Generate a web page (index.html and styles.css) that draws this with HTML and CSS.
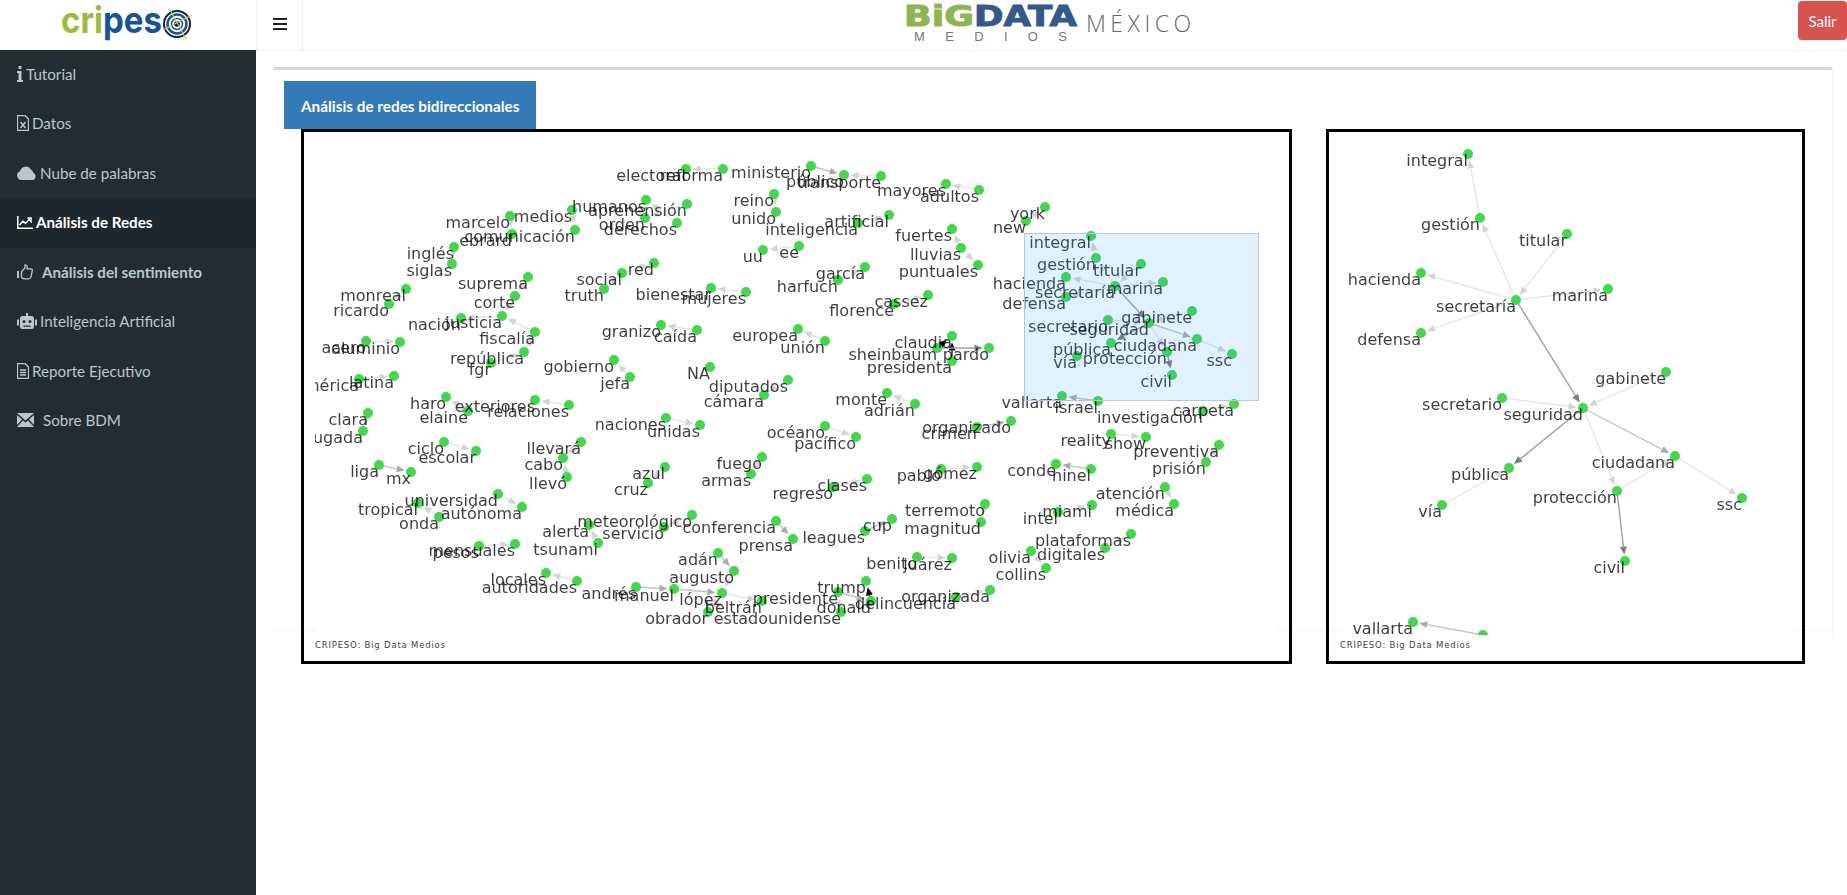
FILE: index.html
```html
<!DOCTYPE html>
<html>
<head>
  <meta charset="utf-8">
  <title>Análisis de Redes</title>
  <meta name="viewport" content="width=device-width, initial-scale=1.0">
  <link rel="stylesheet" href="styles.css">
</head>
<body>
  <div class="app">
    <aside class="side">
      <div class="logo">
        <svg width="256" height="50" viewBox="0 0 256 50">
          <text class="logo-word" x="61" y="33" textLength="101" lengthAdjust="spacingAndGlyphs"><tspan class="logo-green">cri</tspan><tspan class="logo-blue">pes</tspan></text>
          <circle cx="177" cy="24" r="13" fill="none" stroke="#222" stroke-width="2"/>
          <circle cx="177" cy="24" r="9.5" fill="none" stroke="#15549a" stroke-width="2.5"/>
          <circle cx="177" cy="24" r="5.5" fill="none" stroke="#15549a" stroke-width="1.5"/>
          <circle cx="177" cy="24" r="2.8" fill="#111"/>
          <path d="M163 30L192 15M169 8L186 39" stroke="#b5cf6b" stroke-width="1.2"/>
        </svg>
      </div>
      <nav class="menu">
        <a class="item">
          <svg class="ico" width="6" height="16" viewBox="0 0 6 16"><path d="M1.5 0h3v3h-3zM0 5h4.500v9H6v2H0v-2h1.500V7H0z"/></svg>
          <span>Tutorial</span>
        </a>
        <a class="item">
          <svg class="ico" width="12" height="16" viewBox="0 0 12 16"><path d="M1 .5h7L11.500 4v11.500H.5V.5z" fill="none" stroke="currentColor" stroke-width="1.300"/><path d="M3.500 7l5 6M8.500 7l-5 6" stroke="currentColor" stroke-width="1.500" fill="none"/></svg>
          <span>Datos</span>
        </a>
        <a class="item">
          <svg class="ico" width="20" height="15" viewBox="0 0 20 15"><path d="M4.500 15A4.500 4.500 0 0 1 3 6.300 6 6 0 0 1 14 4.500a3.500 3.500 0 0 1 2 3A4 4 0 0 1 16 15z"/></svg>
          <span>Nube de palabras</span>
        </a>
        <a class="item active">
          <svg class="ico" width="16" height="13" viewBox="0 0 16 13"><path d="M.8 0v12.200H16" fill="none" stroke="currentColor" stroke-width="1.500"/><path d="M2.500 9L6 5l2.500 2.500L12 3.500l2 2V2h-3.500" fill="none" stroke="currentColor" stroke-width="1.500"/></svg>
          <span>Análisis de Redes</span>
        </a>
        <a class="item bold wide">
          <svg class="ico" width="16" height="16" viewBox="0 0 16 16"><path d="M0 7h2v7H0z"/><path d="M4.500 7.500L8 4V.8c2 0 2.500 1.700 2 4h4c1.500 0 1.500 1.500 1 3l-1 5c-.3 1.200-1 2-2.500 2H8c-2 0-3.500-1-3.500-2z" fill="none" stroke="currentColor" stroke-width="1.300"/></svg>
          <span>Análisis del sentimiento</span>
        </a>
        <a class="item">
          <svg class="ico" width="20" height="16" viewBox="0 0 20 16"><path d="M9 0h2v3H9z"/><path d="M5.500 3h9A2.500 2.500 0 0 1 17 5.500v8a2.500 2.500 0 0 1-2.500 2.500h-9A2.500 2.500 0 0 1 3 13.500v-8A2.500 2.500 0 0 1 5.500 3zM7 7a1.500 1.500 0 1 0 0 3 1.500 1.500 0 0 0 0-3zm6 0a1.500 1.500 0 1 0 0 3 1.500 1.500 0 0 0 0-3zM6.500 12.500v1.500h2v-1.500zm2.500 0v1.500h2v-1.500zm2.500 0v1.500h2v-1.500z" fill-rule="evenodd"/><path d="M0 6.500h2v6H0zM18 6.500h2v6h-2z"/></svg>
          <span>Inteligencia Artificial</span>
        </a>
        <a class="item">
          <svg class="ico" width="12" height="16" viewBox="0 0 12 16"><path d="M1 .5h7L11.500 4v11.500H.5V.5z" fill="none" stroke="currentColor" stroke-width="1.300"/><path d="M3 7h6M3 9.500h6M3 12h6" stroke="currentColor" stroke-width="1.300"/></svg>
          <span>Reporte Ejecutivo</span>
        </a>
        <a class="item wide">
          <svg class="ico" width="17" height="14" viewBox="0 0 17 14"><path d="M0 0h17L8.500 7.500zM0 2l5 4.500L0 12zM17 2l-5 4.500L17 12zM6 7.500L8.500 9.500 11 7.500 17 14H0z"/></svg>
          <span>Sobre BDM</span>
        </a>
      </nav>
    </aside>

    <main class="main">
      <header class="top">
        <button class="toggle" type="button">
          <svg width="14" height="12" viewBox="0 0 14 12"><path d="M0 0h14v2H0zM0 5h14v2H0zM0 10h14v2H0z" fill="#222"/></svg>
        </button>
        <div class="brand">
          <svg width="287" height="50" viewBox="0 0 287 50">
            <text class="big" x="0" y="26" textLength="70" lengthAdjust="spacingAndGlyphs">BiG</text>
            <text class="data" x="70" y="26" textLength="103" lengthAdjust="spacingAndGlyphs">DATA</text>
            <text class="medios" x="10" y="41" textLength="153">MEDIOS</text>
            <text class="mexico" x="182" y="32" textLength="105">MÉXICO</text>
          </svg>
        </div>
        <button class="exit" type="button">Salir</button>
      </header>

      <section class="box">
        <div class="box-body">
          <div class="tab">Análisis de redes bidireccionales</div>
          <div class="frames">
            <div class="frame frame-main">
              <svg id="graphMain" class="graph" width="963" height="503" viewBox="315 132 963 503"></svg>
              <p class="caption">CRIPESO: Big Data Medios</p>
            </div>
            <div class="frame frame-zoom">
              <svg id="graphZoom" class="graph" width="451" height="503" viewBox="1340 132 451 503"></svg>
              <p class="caption">CRIPESO: Big Data Medios</p>
            </div>
          </div>
        </div>
        <div class="box-footer"></div>
      </section>
    </main>
  </div>

  <script src="graph.js"></script>
</body>
</html>
```

FILE: styles.css
```css
body {
  margin: 0;
  font-family: Lato, "Open Sans", sans-serif;
  background-color: #fff;
  color: #333;
}

.app {
  display: flex;
  height: 895px;
  overflow: hidden;
}

/* sidebar */
.side {
  width: 256px;
  flex-shrink: 0;
  background-color: #222d32;
}

.logo {
  height: 50px;
  background-color: #fff;
}

.logo svg {
  display: block;
}

.logo-word {
  font-family: Inter, sans-serif;
  font-weight: 700;
  font-size: 37px;
}

.logo-green {
  fill: #9bbb3c;
}

.logo-blue {
  fill: #15549a;
}

.item {
  display: flex;
  align-items: center;
  height: 49.5px;
  padding-left: 17px;
  padding-bottom: 2px;
  box-sizing: border-box;
  color: #b8c7ce;
  font-size: 15.2px;
}

.ico {
  fill: currentColor;
  margin-right: 3px;
  flex-shrink: 0;
}

.item.active {
  background-color: #1e282c;
  color: #fff;
  font-weight: bold;
}

.item.bold {
  font-weight: bold;
}

.item.wide .ico {
  margin-right: 9px;
}

/* top bar */
.main {
  flex: 1;
  min-width: 0;
}

.top {
  display: flex;
  height: 50px;
  border-bottom: 1px solid #eee;
}

.toggle {
  width: 47px;
  padding: 0;
  background: #fff;
  border: none;
  border-right: 1px solid #eee;
  border-left: 1px solid #eee;
}

.brand {
  flex: 1;
  display: flex;
  justify-content: center;
  padding-right: 7px;
}

.big {
  font-family: "DejaVu Sans", sans-serif;
  font-weight: bold;
  font-size: 28px;
  fill: #8db550;
  stroke: #8db550;
  stroke-width: 1;
}

.data {
  font-family: "DejaVu Sans", sans-serif;
  font-weight: bold;
  font-size: 28px;
  fill: #34598c;
  stroke: #34598c;
  stroke-width: 1;
}

.medios {
  font-family: "Liberation Sans", sans-serif;
  font-size: 13px;
  fill: #777;
}

.mexico {
  font-family: "Open Sans", sans-serif;
  font-weight: 300;
  font-size: 23px;
  fill: #666;
}

.exit {
  width: 49px;
  height: 39px;
  margin-top: 1px;
  padding: 0;
  background-color: #d9534f;
  color: #fff;
  border: none;
  border-radius: 4px;
  font-family: Lato, sans-serif;
  font-size: 15px;
}

/* content box */
.box {
  margin: 16px 14px 0 17px;
  border-top: 3px solid #d2d6de;
  border-right: 1px solid #f4f4f4;
  border-radius: 3px;
}

.box-body {
  height: 560px;
  padding-top: 11px;
  box-sizing: border-box;
}

.box-footer {
  height: 8px;
  border-top: 1px solid #eee;
}

.tab {
  width: 252px;
  height: 48px;
  margin-left: 11px;
  padding-left: 17px;
  box-sizing: border-box;
  background-color: #337ab7;
  color: #fff;
  font-size: 15.300px;
  font-weight: bold;
  line-height: 50px;
}

.frames {
  display: flex;
  gap: 34px;
  margin-left: 28px;
  position: relative;
  z-index: 1;
}

.frame {
  height: 535px;
  box-sizing: border-box;
  border: 3px solid #000;
}

.frame-main {
  width: 991px;
  padding-left: 11px;
}

.frame-zoom {
  width: 479px;
  padding-left: 11px;
}

.graph {
  display: block;
  background-color: #fff;
  filter: blur(0.35px);
}

.caption {
  margin: 3px 0 0;
  font-family: "DejaVu Sans", sans-serif;
  font-size: 8.500px;
  letter-spacing: 0.8px;
  line-height: 14px;
  color: #444;
}

/* graph parts */
.lbl {
  font-family: "DejaVu Sans", sans-serif;
  font-size: 16px;
  text-anchor: end;
  fill: #000;
  fill-opacity: 0.76;
}

.dot {
  fill: #3fd94a;
}

.lasso {
  fill: rgba(51, 153, 255, 0.14);
  stroke: #b4c7dc;
  stroke-width: 1;
}
```

FILE: graph.js
```js
const mainNodes = {
  electoral: [686, 169], reforma: [723, 169], ministerio: [811, 166], "público": [844, 175], transporte: [881, 176],
  mayores: [946, 184], adultos: [979, 190], medios: [572, 210], marcelo: [510, 216], "comunicación": [575, 230],
  ebrard: [512, 234], humanos: [646, 200], "aprehensión": [687, 204], orden: [645, 218], derechos: [677, 223],
  reino: [774, 194], unido: [776, 212], inteligencia: [858, 223], artificial: [889, 215], uu: [763, 250], ee: [799, 246],
  "inglés": [454, 247], siglas: [452, 264], suprema: [528, 277], corte: [515, 296], justicia: [502, 316],
  "nación": [461, 318], "fiscalía": [535, 332], "república": [524, 352], fgr: [491, 363], red: [654, 263],
  social: [622, 273], truth: [604, 289], bienestar: [711, 288], mujeres: [746, 292], monreal: [406, 289],
  ricardo: [389, 304], granizo: [661, 325], "caída": [697, 330], europea: [798, 329], "unión": [825, 341],
  acero: [366, 341], aluminio: [400, 342], gobierno: [614, 360], jefa: [630, 377], NA: [710, 367],
  diputados: [788, 380], "cámara": [764, 395], "américa": [359, 379], latina: [394, 376], haro: [446, 397],
  elaine: [468, 411], exteriores: [535, 400], relaciones: [569, 405], clara: [368, 413], madrugada: [363, 431],
  ciclo: [444, 442], escolar: [476, 451], "llevará": [581, 442], cabo: [563, 458], "llevó": [567, 477],
  liga: [379, 465], mx: [411, 472], naciones: [666, 418], unidas: [700, 425], azul: [665, 467], cruz: [648, 483],
  fuego: [762, 457], armas: [751, 474], universidad: [498, 494], "autónoma": [522, 507], tropical: [418, 503],
  onda: [439, 517], "meteorológico": [692, 515], servicio: [664, 527], alerta: [589, 525], tsunami: [598, 543],
  conferencia: [776, 521], prensa: [793, 539], mensuales: [515, 544], pesos: [479, 546], "adán": [718, 553],
  augusto: [734, 571], locales: [546, 573], autoridades: [577, 581], "andrés": [636, 587], manuel: [674, 589],
  "lópez": [722, 593], "beltrán": [762, 601], presidente: [838, 592], obrador: [708, 612], estadounidense: [841, 612],
  monte: [887, 393], "adrián": [915, 404], "océano": [825, 426], "pacífico": [856, 437], organizado: [1011, 421],
  crimen: [977, 427], regreso: [833, 487], clases: [867, 479], pablo: [941, 469], "gómez": [977, 467],
  conde: [1056, 464], ninel: [1091, 469], vallarta: [1062, 396], israel: [1098, 401], "investigación": [1203, 411],
  carpeta: [1234, 404], reality: [1111, 434], show: [1146, 437], preventiva: [1219, 445], "prisión": [1206, 462],
  "atención": [1165, 487], "médica": [1174, 504], miami: [1092, 505], intel: [1058, 512], terremoto: [985, 504],
  magnitud: [981, 522], cup: [892, 519], leagues: [865, 531], plataformas: [1131, 534], digitales: [1105, 548],
  olivia: [1031, 551], collins: [1046, 568], benito: [917, 557], "juárez": [952, 558], trump: [866, 581],
  donald: [871, 601], delincuencia: [956, 597], organizada: [990, 590], york: [1045, 207], new: [1026, 221],
  fuertes: [952, 229], lluvias: [961, 248], puntuales: [978, 265], "garcía": [865, 267], harfuch: [838, 280],
  cassez: [928, 295], florence: [894, 304], claudia: [952, 336], sheinbaum: [937, 348], pardo: [989, 348],
  presidenta: [952, 361], integral: [1091, 236], "gestión": [1096, 258], titular: [1141, 264], hacienda: [1066, 277],
  "secretaría": [1115, 286], marina: [1163, 282], defensa: [1066, 297], gabinete: [1192, 311], secretario: [1108, 320],
  seguridad: [1149, 323], ciudadana: [1197, 339], ssc: [1232, 354], "pública": [1111, 343], "protección": [1167, 352],
  "vía": [1077, 356], civil: [1172, 375]
};

// from, to, shade (l light, m mid, d dark, k black)
const clusterEdges = [
  ["gestión", "integral", "l"], ["secretaría", "gestión", "l"], ["titular", "secretaría", "l"],
  ["secretaría", "hacienda", "l"], ["secretaría", "marina", "l"], ["secretaría", "defensa", "l"],
  ["secretaría", "seguridad", "d"], ["gabinete", "seguridad", "l"], ["secretario", "seguridad", "l"],
  ["seguridad", "pública", "d"], ["seguridad", "ciudadana", "m"], ["seguridad", "protección", "l"],
  ["ciudadana", "ssc", "l"], ["protección", "civil", "d"]
];

const mainEdges = clusterEdges.concat([
  ["reforma", "electoral", "l"], ["ministerio", "público", "m"], ["transporte", "público", "l"], ["adultos", "mayores", "l"],
  ["medios", "comunicación", "l"], ["marcelo", "ebrard", "l"], ["derechos", "humanos", "l"], ["aprehensión", "orden", "l"],
  ["reino", "unido", "l"], ["inteligencia", "artificial", "l"], ["ee", "uu", "l"], ["inglés", "siglas", "l"],
  ["suprema", "corte", "l"], ["corte", "justicia", "l"], ["fiscalía", "justicia", "l"], ["justicia", "nación", "l"],
  ["república", "fiscalía", "l"], ["fgr", "república", "l"], ["social", "red", "l"], ["truth", "social", "l"],
  ["mujeres", "bienestar", "l"], ["monreal", "ricardo", "l"], ["caída", "granizo", "l"], ["unión", "europea", "l"],
  ["acero", "aluminio", "l"], ["jefa", "gobierno", "l"], ["diputados", "cámara", "l"], ["américa", "latina", "l"],
  ["elaine", "haro", "l"], ["relaciones", "exteriores", "l"], ["clara", "madrugada", "l"], ["ciclo", "escolar", "l"],
  ["llevó", "cabo", "l"], ["llevará", "cabo", "l"], ["liga", "mx", "m"], ["naciones", "unidas", "l"], ["azul", "cruz", "l"],
  ["fuego", "armas", "l"], ["universidad", "autónoma", "l"], ["onda", "tropical", "l"], ["meteorológico", "servicio", "l"],
  ["tsunami", "alerta", "l"], ["conferencia", "prensa", "m"], ["pesos", "mensuales", "l"], ["adán", "augusto", "m"],
  ["augusto", "lópez", "l"], ["autoridades", "locales", "l"], ["andrés", "manuel", "m"], ["manuel", "lópez", "m"],
  ["lópez", "beltrán", "l"], ["lópez", "obrador", "l"], ["presidente", "donald", "m"], ["estadounidense", "presidente", "l"],
  ["donald", "trump", "k"], ["delincuencia", "organizada", "l"], ["crimen", "organizado", "m"], ["adrián", "monte", "l"],
  ["océano", "pacífico", "l"], ["regreso", "clases", "l"], ["pablo", "gómez", "l"], ["ninel", "conde", "m"],
  ["israel", "vallarta", "m"], ["investigación", "carpeta", "l"], ["reality", "show", "l"], ["preventiva", "prisión", "l"],
  ["atención", "médica", "l"], ["intel", "miami", "l"], ["terremoto", "magnitud", "l"], ["leagues", "cup", "m"],
  ["digitales", "plataformas", "l"], ["olivia", "collins", "l"], ["benito", "juárez", "l"], ["new", "york", "l"],
  ["lluvias", "fuertes", "l"], ["lluvias", "puntuales", "l"], ["harfuch", "garcía", "l"], ["florence", "cassez", "l"],
  ["sheinbaum", "claudia", "k"], ["presidenta", "claudia", "k"], ["sheinbaum", "pardo", "d"]
]);

const zoomNodes = {
  integral: [1468, 154], "gestión": [1480, 218], titular: [1567, 234], hacienda: [1421, 273], "secretaría": [1516, 300],
  marina: [1608, 289], defensa: [1421, 333], gabinete: [1666, 372], secretario: [1502, 398], seguridad: [1583, 408],
  "pública": [1509, 468], ciudadana: [1675, 456], "protección": [1617, 491], "vía": [1442, 505], ssc: [1742, 498],
  civil: [1625, 561], vallarta: [1413, 622], israel: [1483, 635]
};

const zoomEdges = clusterEdges.concat([
  ["vía", "pública", "l"], ["protección", "ciudadana", "l"], ["israel", "vallarta", "m"]
]);

const shades = { l: "#e6e6e6", m: "#c4c4c4", d: "#a2a2a2", k: "#222" };
const heads = { l: "#d4d4d4", m: "#ababab", d: "#7c7c7c", k: "#000" };

function edgeMarkup(nodes, edge) {
  const a = nodes[edge[0]];
  const b = nodes[edge[1]];
  const dx = b[0] - a[0];
  const dy = b[1] - a[1];
  const len = Math.hypot(dx, dy);
  const ux = dx / len;
  const uy = dy / len;

  // arrow tip stops just short of the dot
  const tipX = b[0] - ux * 6.5;
  const tipY = b[1] - uy * 6.5;
  const baseX = tipX - ux * 8;
  const baseY = tipY - uy * 8;
  const p1 = (baseX - uy * 3.5).toFixed(1) + "," + (baseY + ux * 3.5).toFixed(1);
  const p2 = (baseX + uy * 3.5).toFixed(1) + "," + (baseY - ux * 3.5).toFixed(1);
  const tip = tipX.toFixed(1) + "," + tipY.toFixed(1);

  return '<line x1="' + a[0] + '" y1="' + a[1] + '" x2="' + baseX.toFixed(1) + '" y2="' + baseY.toFixed(1) +
    '" stroke="' + shades[edge[2]] + '" stroke-width="1.4"/>' +
    '<polygon points="' + tip + " " + p1 + " " + p2 + '" fill="' + heads[edge[2]] + '"/>';
}

function drawGraph(id, nodes, edges, extra) {
  let html = edges.map(function(e) { return edgeMarkup(nodes, e); }).join("");
  const names = Object.keys(nodes);

  names.forEach(function(name) {
    html += '<circle class="dot" cx="' + nodes[name][0] + '" cy="' + nodes[name][1] + '" r="5"/>';
  });
  names.forEach(function(name) {
    html += '<text class="lbl" x="' + nodes[name][0] + '" y="' + (nodes[name][1] + 12) + '">' + name + "</text>";
  });

  document.getElementById(id).innerHTML = html + (extra || "");
}

drawGraph("graphMain", mainNodes, mainEdges, '<rect class="lasso" x="1024.500" y="233.500" width="234" height="167"/>');
drawGraph("graphZoom", zoomNodes, zoomEdges);
```
